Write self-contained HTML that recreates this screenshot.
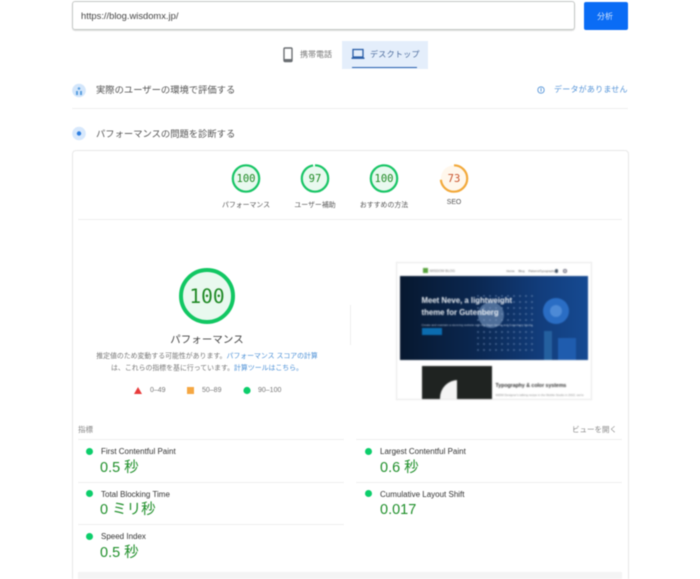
<!DOCTYPE html>
<html lang="ja"><head><meta charset="utf-8">
<style>
html,body{margin:0;padding:0;background:#fff;}
body{width:700px;height:579px;overflow:hidden;position:relative;font-family:"Liberation Sans","Noto Sans CJK JP",sans-serif;}
#w{position:absolute;left:0;top:0;width:700px;height:579px;filter:blur(.45px);overflow:hidden;}
.a{position:absolute;white-space:nowrap;}
.c{text-align:center;transform:translateX(-50%);}
.ln{position:absolute;background:#efefef;height:1px;}
.gt{position:absolute;left:0;top:0;}
.dot{position:absolute;width:7px;height:7px;border-radius:50%;background:#0cce6b;}
.ml{position:absolute;font-size:8px;color:#333;white-space:nowrap;}
.mv{position:absolute;font-size:14.5px;color:#1f8f2a;white-space:nowrap;line-height:18px;}
.sl{position:absolute;font-size:6.9px;color:#555;white-space:nowrap;transform:translateX(-50%);}
</style></head><body><div id="w">

<div class="a" style="left:72px;top:1px;width:501px;height:27px;border:1px solid #c4c7c5;border-radius:3px;box-shadow:0 1px 1px #ddd;"></div>
<div class="a" style="left:81px;top:9.500px;font-size:9.400px;color:#444;">https://blog.wisdomx.jp/</div>
<div class="a" style="left:584px;top:2px;width:44px;height:28px;background:#0a6cf5;border-radius:2px;"></div>
<div class="a" style="left:597px;top:11px;font-size:8px;color:#cfe2fd;">分析</div>

<svg class="a" style="left:282px;top:47px" width="12" height="16" viewBox="0 0 12 16"><rect x="2" y="1" width="8" height="13.5" rx="1" fill="none" stroke="#6b6f73" stroke-width="1.4"/><rect x="2" y="12" width="8" height="2.500" fill="#6b6f73"/></svg>
<div class="a" style="left:300px;top:48.500px;font-size:8px;color:#777;">携帯電話</div>
<div class="a" style="left:342px;top:41px;width:86px;height:28px;background:#e4eefb;"></div>
<div class="a" style="left:352px;top:66.500px;width:65px;height:1.500px;background:#2a62b0;"></div>
<svg class="a" style="left:351px;top:48px" width="14" height="13" viewBox="0 0 14 13"><rect x="2" y="1.5" width="10" height="7.5" fill="none" stroke="#2a5ea8" stroke-width="1.3"/><rect x="0.5" y="9.5" width="13" height="1.4" fill="#2a5ea8"/></svg>
<div class="a" style="left:370px;top:48.500px;font-size:8px;color:#4a6a9c;letter-spacing:.3px;">デスクトップ</div>

<svg class="a" style="left:71px;top:82px" width="16" height="17" viewBox="0 0 16 17"><circle cx="8" cy="8.5" r="6.800" fill="#d3e6fb"/><rect x="5" y="9" width="2" height="4" fill="#5a9fe0"/><rect x="9" y="9" width="2" height="4" fill="#5a9fe0"/><circle cx="8" cy="6.5" r="1.300" fill="#5a9fe0"/></svg>
<div class="a" style="left:96px;top:82px;font-size:9.300px;color:#555;">実際のユーザーの環境で評価する</div>
<svg class="a" style="left:537px;top:86px" width="8" height="8" viewBox="0 0 8 8"><circle cx="4" cy="4" r="3.2" fill="none" stroke="#5594d8" stroke-width=".9"/><rect x="3.6" y="2" width=".9" height="3.6" fill="#5594d8"/></svg>
<div class="a" style="left:554px;top:84px;font-size:8px;color:#5594d8;letter-spacing:.22px;">データがありません</div>
<div class="ln" style="left:72px;top:108px;width:556px;"></div>

<svg class="a" style="left:71px;top:125px" width="16" height="17" viewBox="0 0 16 17"><circle cx="8" cy="8.5" r="6.800" fill="#d7e8fc"/><circle cx="8" cy="8.5" r="2.200" fill="#2f7fe0"/></svg>
<div class="a" style="left:96px;top:125.500px;font-size:9.300px;color:#555;">パフォーマンスの問題を診断する</div>

<div class="a" style="left:72px;top:150px;width:555px;height:440px;border:1px solid #e8e8e8;border-radius:4px;"></div>

<svg class="gt" width="700" height="579" viewBox="0 0 700 579" style="position:absolute">
<g fill="#e9f9ef" stroke="#19c566" stroke-width="2.2">
<circle cx="246" cy="178.500" r="13.200"/>
<circle cx="384" cy="178.500" r="13.200"/>
</g>
<circle cx="315" cy="178.500" r="13.200" fill="#e9f9ef"/>
<circle cx="315" cy="178.500" r="13.200" fill="none" stroke="#19c566" stroke-width="2.2" stroke-dasharray="80.4 2.5" transform="rotate(-90 315 178.500)"/>
<circle cx="454" cy="178.500" r="13.200" fill="#fff7ec"/>
<circle cx="454" cy="178.500" r="13.200" fill="none" stroke="#f2a93b" stroke-width="2.2" stroke-dasharray="60.5 22.4" transform="rotate(-90 454 178.500)"/>
<circle cx="207" cy="296" r="26" fill="#e9f9ef" stroke="#12c763" stroke-width="4"/>
<polygon points="138,387 142,394 134,394" fill="#e83b3b"/>
<rect x="187" y="387" width="7" height="7" fill="#f5a742"/>
<circle cx="247" cy="390.500" r="3.600" fill="#0cce6b"/>
</svg>
<div class="a c" style="left:246px;top:172.500px;font:10.500px 'DejaVu Sans Mono','Liberation Mono',monospace;color:#1f8a25;">100</div>
<div class="a c" style="left:315px;top:172.500px;font:10.500px 'DejaVu Sans Mono','Liberation Mono',monospace;color:#1f8a25;">97</div>
<div class="a c" style="left:384px;top:172.500px;font:10.500px 'DejaVu Sans Mono','Liberation Mono',monospace;color:#1f8a25;">100</div>
<div class="a c" style="left:454px;top:172.500px;font:10.500px 'DejaVu Sans Mono','Liberation Mono',monospace;color:#c8532c;">73</div>
<div class="sl" style="left:246px;top:198.500px;">パフォーマンス</div>
<div class="sl" style="left:315px;top:198.500px;">ユーザー補助</div>
<div class="sl" style="left:384px;top:198.500px;">おすすめの方法</div>
<div class="sl" style="left:454px;top:198.500px;">SEO</div>
<div class="ln" style="left:78px;top:219px;width:544px;"></div>

<div class="a c" style="left:207px;top:285px;font:19.500px 'DejaVu Sans Mono','Liberation Mono',monospace;color:#1f8a25;">100</div>
<div class="a c" style="left:207px;top:331px;font-size:10.400px;color:#444;letter-spacing:.15px;">パフォーマンス</div>
<div class="a c" style="left:207px;top:350px;font-size:6.900px;color:#777;">推定値のため変動する可能性があります。<span style="color:#4a8fd6">パフォーマンス スコアの計算</span></div>
<div class="a c" style="left:207px;top:362px;font-size:6.900px;color:#777;">は、これらの指標を基に行っています。<span style="color:#4a8fd6">計算ツールはこちら。</span></div>
<div class="a" style="left:150px;top:386.500px;font-size:7px;color:#777;">0–49</div>
<div class="a" style="left:202px;top:386.500px;font-size:7px;color:#777;">50–89</div>
<div class="a" style="left:258px;top:386.500px;font-size:7px;color:#777;">90–100</div>
<div class="a" style="left:350px;top:305px;width:1px;height:40px;background:#eee;"></div>

<div class="a" style="left:396.500px;top:262.500px;width:194px;height:136px;background:#fff;box-shadow:0 0 0 1px #e8e8e8;overflow:hidden;filter:blur(.6px);">
  <div class="a" style="left:26px;top:5.500px;width:5px;height:5px;background:#5aa33f;"></div>
  <div class="a" style="left:33px;top:6px;font-size:3.500px;color:#777;">WISDOM BLOG</div>
  <div class="a" style="left:110px;top:6px;font-size:3px;color:#555;">Home</div>
  <div class="a" style="left:122px;top:6px;font-size:3px;color:#555;">Blog</div>
  <div class="a" style="left:132px;top:6px;font-size:3px;color:#555;">Patterns</div>
  <div class="a" style="left:143px;top:6px;font-size:3px;color:#555;">Typography</div>
  <div class="a" style="left:158.500px;top:6px;width:3px;height:4px;background:#456;border-radius:2px;"></div>
  <div class="a" style="left:166px;top:6px;width:2.500px;height:2.500px;border:.7px solid #667;border-radius:50%;"></div>
  <div class="a" style="left:3px;top:13px;width:188px;height:84px;background:linear-gradient(90deg,#07182f 0%,#0b2750 40%,#123d7c 75%,#164a92 100%);overflow:hidden;">
    <div class="a" style="left:143px;top:22px;width:26px;height:26px;border-radius:50%;background:#2a6dc4;"></div>
    <div class="a" style="left:150px;top:29px;width:12px;height:12px;border-radius:50%;background:#4d8ad6;"></div>
    <div class="a" style="left:78px;top:26px;width:26px;height:26px;border-radius:50%;background:#5f7ea8;opacity:.8;"></div>
    <div class="a" style="left:144px;top:55px;width:8px;height:30px;background:#24609f;"></div>
    <div class="a" style="left:158px;top:62px;width:18px;height:23px;background:#1f5cae;"></div>
    <div class="a" style="left:75px;top:17px;width:60px;height:60px;background-image:radial-gradient(#7f9cc4 .7px,transparent .9px);background-size:6px 6px;opacity:.7;"></div>
  </div>
  <div class="a" style="left:25px;top:32.500px;font-size:7.800px;font-weight:bold;color:#e8edf3;line-height:11.500px;">Meet Neve, a lightweight<br>theme for Gutenberg</div>
  <div class="a" style="left:25px;top:60px;font-size:3px;color:#b5c3d6;">Create and maintain a stunning website with the Neve theme and Gutenberg blocks</div>
  <div class="a" style="left:25px;top:65px;width:20px;height:7px;background:#0b6cb0;"></div>
  <div class="a" style="left:25px;top:103px;width:70px;height:33px;background:#1f2321;overflow:hidden;">
    <div class="a" style="left:18px;top:14px;width:36px;height:36px;border-radius:50%;background:#f4f4f4;"></div>
    <div class="a" style="left:35px;top:0;width:35px;height:33px;background:#1f2321;"></div>
  </div>
  <div class="a" style="left:99px;top:120px;font-size:5.200px;font-weight:bold;color:#333;">Typography &amp; color systems</div>
  <div class="a" style="left:99px;top:130px;font-size:3px;color:#888;">WiDM Designer's talking recipe in the Mobile Studio in 2022, we're</div>
</div>

<div class="a" style="left:78px;top:424px;font-size:7.500px;color:#888;">指標</div>
<div class="a" style="right:83px;top:424px;font-size:7.500px;color:#888;">ビューを開く</div>
<div class="ln" style="left:78px;top:439px;width:266px;"></div>
<div class="ln" style="left:356px;top:439px;width:266px;"></div>

<div class="dot" style="left:85.500px;top:448px;"></div>
<div class="ml" style="left:101px;top:446.500px;">First Contentful Paint</div>
<div class="mv" style="left:100px;top:459px;">0.5 秒</div>
<div class="dot" style="left:365px;top:448px;"></div>
<div class="ml" style="left:380px;top:446.500px;">Largest Contentful Paint</div>
<div class="mv" style="left:380px;top:459px;">0.6 秒</div>
<div class="ln" style="left:78px;top:482px;width:266px;"></div>
<div class="ln" style="left:356px;top:482px;width:266px;"></div>

<div class="dot" style="left:85.500px;top:490px;"></div>
<div class="ml" style="left:101px;top:489.500px;">Total Blocking Time</div>
<div class="mv" style="left:100px;top:501px;">0 ミリ秒</div>
<div class="dot" style="left:365px;top:490px;"></div>
<div class="ml" style="left:380px;top:489.500px;">Cumulative Layout Shift</div>
<div class="mv" style="left:380px;top:501px;">0.017</div>
<div class="ln" style="left:78px;top:524px;width:266px;"></div>

<div class="dot" style="left:85.500px;top:532.500px;"></div>
<div class="ml" style="left:101px;top:531.500px;">Speed Index</div>
<div class="mv" style="left:100px;top:543.500px;">0.5 秒</div>

<div class="a" style="left:78px;top:572px;width:544px;height:10px;background:#f4f4f4;"></div>
</div></body></html>
